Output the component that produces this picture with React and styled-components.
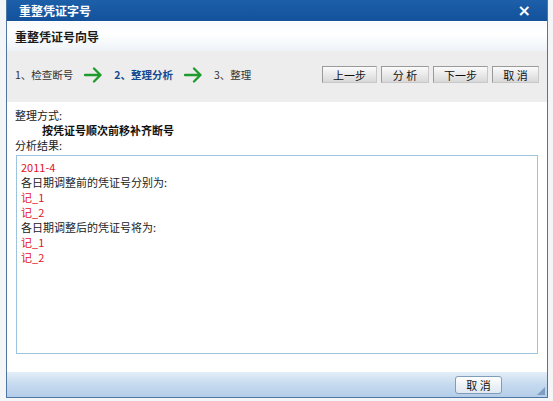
import React from "react";
import styled, { createGlobalStyle } from "styled-components";

const GlobalStyle = createGlobalStyle`
  html, body {
    margin: 0;
    padding: 0;
    background: #f3f5f7;
  }
  body {
    font-family: "Noto Sans CJK SC", "Noto Sans", sans-serif;
    font-size: 12px;
    color: #222;
  }
`;

const steps = [
  { label: "1、检查断号" },
  { label: "2、整理分析", active: true },
  { label: "3、整理" },
];

const lines = [
  { text: "2011-4", red: true },
  { text: "各日期调整前的凭证号分别为:" },
  { text: "记_1", red: true },
  { text: "记_2", red: true },
  { text: "各日期调整后的凭证号将为:" },
  { text: "记_1", red: true },
  { text: "记_2", red: true },
];

const Arrow = () => (
  <svg width="19" height="16" viewBox="0 0 19 16">
    <path
      d="M1 8 H16.5 M10 1.5 L16.5 8 L10 14.5"
      fill="none"
      stroke="#1f9a2c"
      strokeWidth="2.3"
      strokeLinecap="round"
      strokeLinejoin="round"
    />
  </svg>
);

const App = () => {
  return (
    <>
      <GlobalStyle />
      <Page>
        <Window>
          <TitleBar>
            <Title>重整凭证字号</Title>
            <Close>×</Close>
          </TitleBar>
          <Header>重整凭证号向导</Header>
          <StepBar>
            <Steps>
              {steps.map((s, i) => (
                <React.Fragment key={s.label}>
                  {i > 0 && <Arrow />}
                  <Step $active={s.active}>{s.label}</Step>
                </React.Fragment>
              ))}
            </Steps>
            <Buttons>
              <Button $w={55}>上一步</Button>
              <Button $w={48}>分 析</Button>
              <Button $w={55}>下一步</Button>
              <Button $w={47}>取 消</Button>
            </Buttons>
          </StepBar>
          <Content>
            <Label>整理方式:</Label>
            <Method>按凭证号顺次前移补齐断号</Method>
            <Label>分析结果:</Label>
            <ResultBox>
              {lines.map((l, i) => (
                <Line key={i} $red={l.red}>
                  {l.text}
                </Line>
              ))}
            </ResultBox>
          </Content>
          <Footer>
            <FooterButton>取 消</FooterButton>
            <Grip>
              <svg width="8" height="8" viewBox="0 0 8 8">
                <path d="M8 0 L8 8 L0 8 Z" fill="#7d9ec2" />
              </svg>
            </Grip>
          </Footer>
        </Window>
      </Page>
    </>
  );
};

const Page = styled.div`
  padding-left: 6px;
  width: 542px;
`;

const Window = styled.div`
  display: flex;
  flex-direction: column;
  height: 398px;
  border: 1px solid #4f76a3;
  border-top: none;
  box-sizing: border-box;
  background: #fff;
`;

const TitleBar = styled.div`
  display: flex;
  align-items: center;
  justify-content: space-between;
  height: 21px;
  padding: 0 16px 0 12px;
  background: linear-gradient(#1d5fa9, #13519b);
  color: #fff;
`;

const Title = styled.div`
  font-size: 12px;
  font-weight: bold;
`;

const Close = styled.div`
  font-family: "DejaVu Sans", sans-serif;
  font-size: 16px;
  font-weight: bold;
  line-height: 1;
`;

const Header = styled.div`
  display: flex;
  align-items: center;
  height: 29px;
  padding-left: 8px;
  font-size: 12px;
  font-weight: bold;
  color: #1a1a1a;
  background: linear-gradient(#f7f9fb, #ffffff 40%, #eef3f7);
  border-top: 1px solid #ffffff;
`;

const StepBar = styled.div`
  display: flex;
  align-items: center;
  justify-content: space-between;
  height: 51px;
  padding: 0 8px 4px 8px;
  background: #ededed;
  box-sizing: border-box;
`;

const Steps = styled.div`
  display: flex;
  align-items: center;
  gap: 11px;
  font-size: 10.5px;
`;

const Step = styled.span`
  color: ${(p) => (p.$active ? "#17498f" : "#333")};
  font-weight: ${(p) => (p.$active ? "bold" : "normal")};
`;

const Buttons = styled.div`
  display: flex;
  gap: 4px;
`;

const Button = styled.button`
  width: ${(p) => p.$w}px;
  height: 17px;
  padding: 0;
  font-family: inherit;
  font-size: 11px;
  line-height: 14px;
  color: #111;
  border: 1px solid;
  border-color: #9a9a9a #c8c8c8 #c8c8c8 #9a9a9a;
  background: linear-gradient(#fbfbfb, #e6e6e6 60%, #d8d8d8);
`;

const Content = styled.div`
  flex: 1;
  display: flex;
  flex-direction: column;
  padding: 6px 9px 18px 8px;
  font-size: 11px;
  line-height: 15px;
`;

const Label = styled.div`
  color: #222;
`;

const Method = styled.div`
  padding-left: 27px;
  font-weight: bold;
  color: #111;
`;

const ResultBox = styled.div`
  flex: 1;
  margin-top: 2px;
  margin-left: 1px;
  padding: 4px 4px;
  border: 1px solid #9ec3dc;
  background: #fff;
  line-height: 15px;
`;

const Line = styled.div`
  color: ${(p) => (p.$red ? "#e4121d" : "#222")};
`;

const Footer = styled.div`
  position: relative;
  display: flex;
  align-items: center;
  justify-content: flex-end;
  height: 25px;
  padding-right: 45px;
  background: linear-gradient(#e4eef8, #c5daef 50%, #b4cde8);
`;

const FooterButton = styled.button`
  width: 47px;
  height: 18px;
  padding: 0;
  font-family: inherit;
  font-size: 11px;
  color: #111;
  border: 1px solid #7f9db9;
  border-radius: 3px;
  background: linear-gradient(#ffffff, #eef3f8 50%, #dfe8f1);
`;

const Grip = styled.div`
  position: absolute;
  right: 2px;
  bottom: 2px;
  line-height: 0;
`;

export default App;
